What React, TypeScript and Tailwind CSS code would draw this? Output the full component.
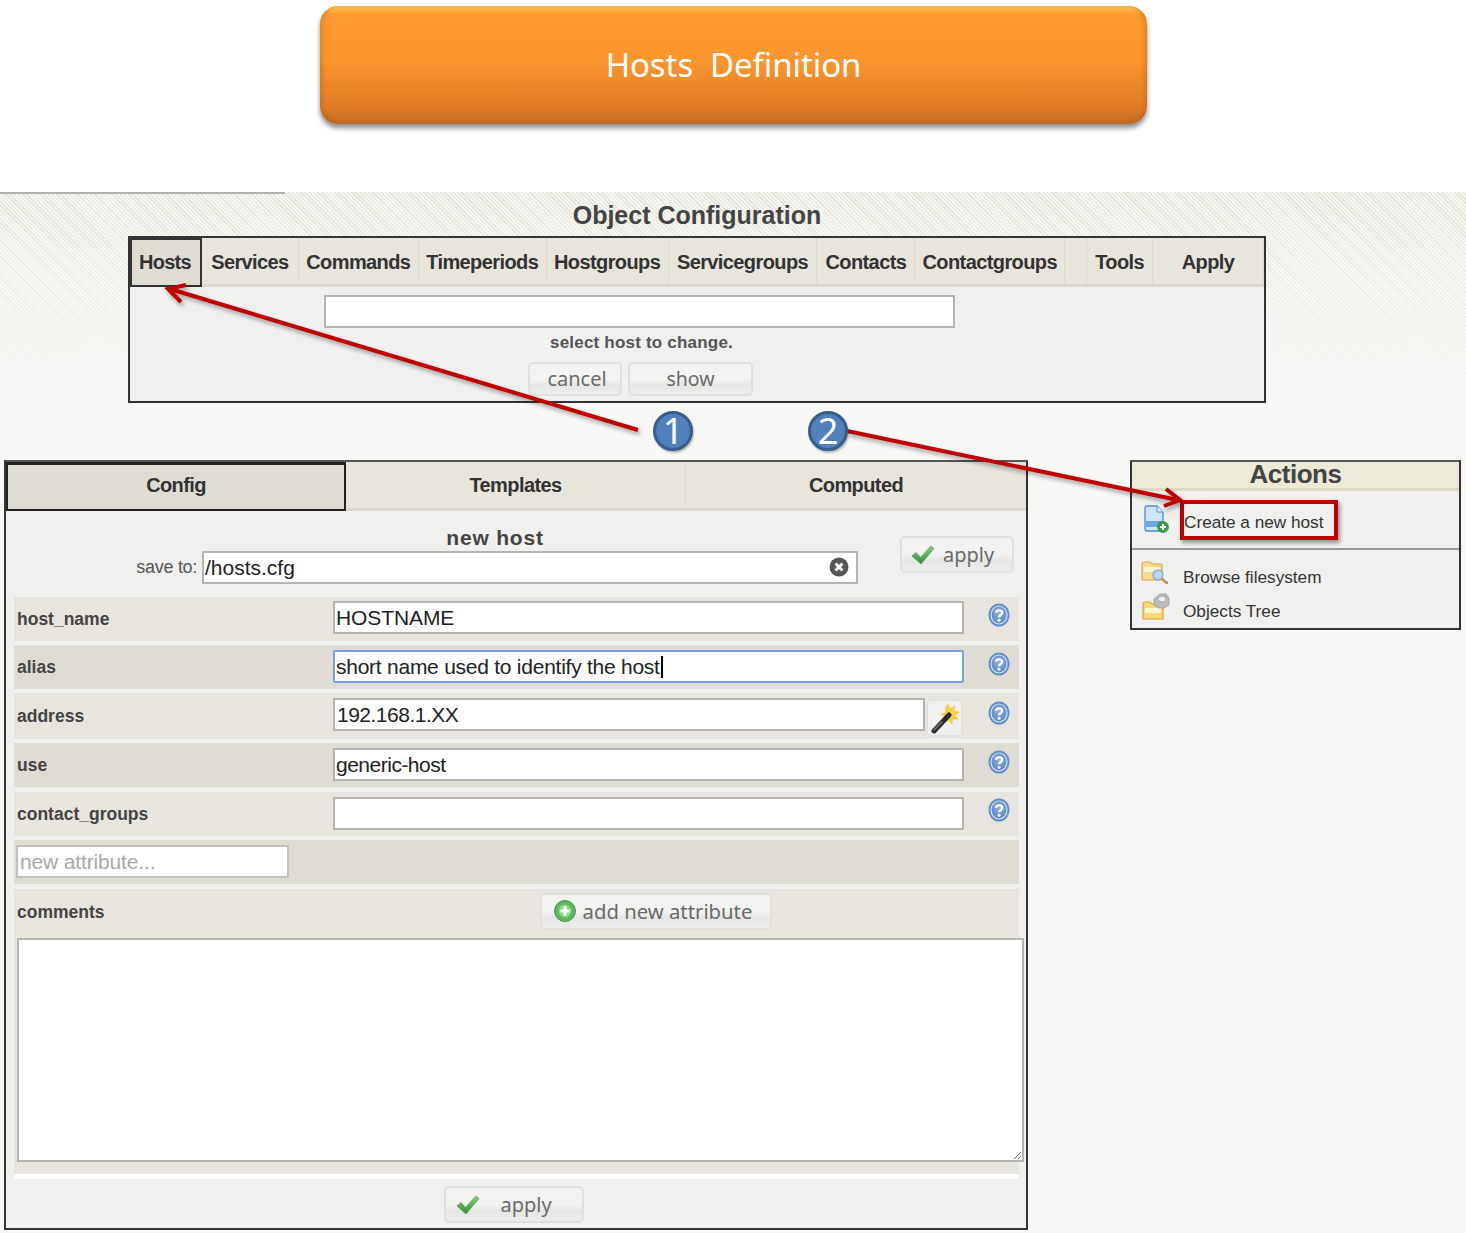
import React from "react";

const sans = "font-['Liberation_Sans',Arial,sans-serif]";
const soft = "font-['Noto_Sans',sans-serif]";

function Check({ size = 24 }: { size?: number }) {
  return (
    <svg width={size} height={size} viewBox="0 0 24 24" className="shrink-0">
      <defs>
        <linearGradient id="chk" x1="0" y1="0" x2="0" y2="1">
          <stop offset="0" stopColor="#8fcf7c" />
          <stop offset="1" stopColor="#2f8f3c" />
        </linearGradient>
      </defs>
      <path d="M1 13 L5 9.5 L9.5 14.5 L20 3 L23 5.5 L10 21 Z" fill="url(#chk)" stroke="#3c8f44" strokeWidth="0.6" />
    </svg>
  );
}

function Help() {
  return (
    <svg width="22" height="24" viewBox="0 0 22 24" className="shrink-0">
      <defs>
        <radialGradient id="hlp" cx="0.5" cy="0.4" r="0.7">
          <stop offset="0" stopColor="#8fb2e2" />
          <stop offset="1" stopColor="#4a7ec4" />
        </radialGradient>
      </defs>
      <ellipse cx="11" cy="12" rx="10.5" ry="11.5" fill="#5f8fcc" />
      <ellipse cx="11" cy="12" rx="8" ry="9" fill="url(#hlp)" stroke="#d4e2f4" strokeWidth="1.2" />
      <path d="M8 9.8 C8 6.6 14.2 6.6 14.2 9.8 C14.2 12 11 11.8 11 14.2" fill="none" stroke="#fff" strokeWidth="2.4" />
      <circle cx="11" cy="17.2" r="1.5" fill="#fff" />
    </svg>
  );
}

function Wand() {
  return (
    <svg width="30" height="32" viewBox="0 0 30 32">
      <path d="M18 2 L20 7 L25 4 L23.5 9 L29 10 L24.5 13 L28 17 L22.5 16.5 L22 22 L18.5 18 L15 20 L15.5 15 L11 12 L16 11 L15.5 6 Z" fill="#f6d33c" stroke="#e8b020" strokeWidth="0.5" />
      <path d="M4 29 L19 13" stroke="#2a2a2a" strokeWidth="5" strokeLinecap="round" />
      <path d="M4 28 L12 20" stroke="#777" strokeWidth="1.4" strokeLinecap="round" />
    </svg>
  );
}

function DocPlus() {
  return (
    <svg width="26" height="28" viewBox="0 0 26 28" className="shrink-0">
      <path d="M2 3 Q2 1 4 1 H14 L20 7 V24 Q20 26 18 26 H4 Q2 26 2 24 Z" fill="#cfe4fa" stroke="#4f8ad0" strokeWidth="1.3" />
      <rect x="3" y="16" width="16" height="6" fill="#6aa6e6" />
      <path d="M14 1 V7 H20" fill="#eaf3fd" stroke="#4f8ad0" strokeWidth="1" />
      <circle cx="20" cy="22" r="5.5" fill="#3f9a4a" stroke="#2a7a36" strokeWidth="0.6" />
      <path d="M20 19 V25 M17 22 H23" stroke="#fff" strokeWidth="1.8" />
    </svg>
  );
}

function FolderSearch() {
  return (
    <svg width="28" height="26" viewBox="0 0 28 26" className="shrink-0">
      <path d="M1 4 Q1 2 3 2 H9 L11 4 H20 Q21 4 21 5 V20 H2 Q1 20 1 19 Z" fill="#f8dc8e" stroke="#e0a458" strokeWidth="1.2" />
      <rect x="3" y="7" width="16" height="5" fill="#fff6d6" />
      <circle cx="17" cy="15" r="5" fill="#bcd7f2" stroke="#7fa4cc" strokeWidth="1.2" />
      <path d="M21 19 L26 23" stroke="#c98a50" strokeWidth="2.4" strokeLinecap="round" />
    </svg>
  );
}

function FolderGear() {
  return (
    <svg width="28" height="28" viewBox="0 0 28 28" className="shrink-0">
      <path d="M1 11 Q1 9 3 9 H8 L10 11 H20 Q21 11 21 12 V26 H2 Q1 26 1 25 Z" fill="#f8d878" stroke="#e0a040" strokeWidth="1.2" />
      <rect x="3" y="15" width="16" height="5" fill="#fff6d6" />
      <path d="M12 6 L18 1 H24 L27 5 V12 L22 15 H17 L12 12 Z" fill="#bdbdbd" stroke="#9a9a9a" strokeWidth="0.8" />
      <ellipse cx="20" cy="6" rx="4" ry="3" fill="#eee" stroke="#999" strokeWidth="0.8" />
    </svg>
  );
}

function Btn({ className, children }: { className: string; children: React.ReactNode }) {
  return (
    <div
      className={`flex items-center justify-center rounded-[5px] border-2 border-[#dfdfdc] bg-[linear-gradient(to_bottom,#f3f3f1_0%,#f3f3f1_50%,#e6e6e4_70%,#ececea_100%)] text-[#6a6a6a] ${soft} ${className}`}
    >
      {children}
    </div>
  );
}

function Box({ className, children }: { className: string; children?: React.ReactNode }) {
  return (
    <div
      className={`flex items-center overflow-hidden whitespace-nowrap border-2 border-[#b4b4b0] bg-white pl-[1px] text-[21px] leading-none text-[#222] ${sans} ${className}`}
    >
      {children}
    </div>
  );
}

const tabs: [string, string][] = [
  ["Services", "w-[97px]"],
  ["Commands", "w-[120px]"],
  ["Timeperiods", "w-[128px]"],
  ["Hostgroups", "w-[122px]"],
  ["Servicegroups", "w-[149px]"],
  ["Contacts", "w-[98px]"],
  ["Contactgroups", "w-[150px]"],
  ["", "w-[22px]"],
  ["Tools", "w-[66px]"],
  ["Apply", "w-[111px]"],
];

function Row({
  label,
  bg,
  className,
  children,
}: {
  label: string;
  bg: string;
  className: string;
  children: React.ReactNode;
}) {
  return (
    <div className={`flex items-center pl-[3px] ${bg} ${className}`}>
      <div className={`w-[316px] pt-[1px] text-[17.5px] font-bold text-[#444] ${sans}`}>{label}</div>
      {children}
    </div>
  );
}

export default function App() {
  return (
    <div className={`relative h-[1233px] w-[1466px] overflow-hidden bg-white ${sans}`}>
      {/* Title banner */}
      <div className="h-[192px] pl-[320px] pt-[6px]">
        <div className="relative flex h-[118px] w-[827px] items-center justify-center rounded-[18px] bg-[linear-gradient(to_bottom,#ffd060_0px,#fd9a30_8px,#fb962e_45%,#e07c26_85%,#c46c22_100%)] shadow-[0_4px_5px_rgba(0,0,0,0.45),inset_3px_0_4px_rgba(150,80,0,0.25),inset_-3px_0_4px_rgba(150,80,0,0.25)]">
          <span className={`text-[33px] tracking-[-0.1px] text-white whitespace-pre ${soft}`}>Hosts  Definition</span>
        </div>
      </div>

      {/* Application area */}
      <div className="h-[1041px] bg-[linear-gradient(to_bottom,rgba(248,248,246,0)_0px,#f8f8f6_205px),repeating-linear-gradient(45deg,#e2e2da_0px,#e2e2da_1px,#f6f6f0_1px,#f6f6f0_3px)]">
        <div className="h-[2px] w-[285px] bg-[#b0b0ac]" />
        <div className="flex h-[42px] items-center justify-center">
          <h1 className="ml-[-72px] text-[25px] font-bold leading-none text-[#444]">Object Configuration</h1>
        </div>

        {/* Host selector */}
        <div className="ml-[128px] h-[167px] w-[1138px] border-2 border-[#333] bg-[#f0f0ee]">
          <div className="flex h-[49px] border-b-[3px] border-[#dcd9cc] bg-[#e8e5dd]">
            <div className="flex h-[49px] w-[72px] items-center justify-center border-2 border-[#333] bg-[#dfdcd3] pb-[2px] pr-[2px] text-[20px] font-bold tracking-[-0.7px] text-[#333]">
              Hosts
            </div>
            {tabs.map(([t, w], i) => (
              <div
                key={i}
                className={`flex items-center justify-center border-r border-[#dcdac8] pt-[1px] text-[20px] font-bold tracking-[-0.6px] text-[#333] ${w}`}
              >
                {t}
              </div>
            ))}
          </div>
          <div className="flex flex-col items-center pr-[115px] pt-[8px]">
            <Box className="h-[33px] w-[631px]" />
            <div className="ml-[4px] mt-[5px] h-[20px] text-[17px] font-bold leading-[20px] tracking-[0.2px] text-[#555]">select host to change.</div>
            <div className="ml-[2px] mt-[9px] flex gap-[6px]">
              <Btn className="h-[34px] w-[94px] pl-[4px] text-[20px]">cancel</Btn>
              <Btn className="h-[34px] w-[125px] text-[19.5px]">show</Btn>
            </div>
          </div>
        </div>

        <div className="mt-[57px] flex items-start">
          {/* Config form */}
          <div className="ml-[4px] h-[770px] w-[1024px] border-2 border-[#333] border-t-[#555] bg-[#f0f0ee]">
            <div className="flex h-[49px] border-b-[3px] border-[#dcd9cc] bg-[#e8e5dd]">
              <div className="flex h-[49px] w-[340px] items-center justify-center border-2 border-t-[3px] border-[#222] bg-[#dfdcd3] pb-[5px] text-[20px] font-bold tracking-[-0.6px] text-[#333]">
                Config
              </div>
              <div className="flex w-[340px] items-center justify-center border-r border-[#dcdac8] pb-[1px] text-[20px] font-bold tracking-[-0.6px] text-[#333]">
                Templates
              </div>
              <div className="flex flex-1 items-center justify-center pb-[1px] text-[20px] font-bold tracking-[-0.6px] text-[#333]">Computed</div>
            </div>

            <div className="flex h-[86px]">
              <div className="w-[852px]">
                <div className="h-[40px] pl-[126px] pt-[15px] text-center text-[21px] font-bold leading-[24px] tracking-[0.8px] text-[#444]">new host</div>
                <div className="flex items-center">
                  <span className="w-[196px] pr-[5px] text-right text-[18px] tracking-[-0.3px] text-[#555]">save to:</span>
                  <Box className="relative h-[33px] w-[656px] pl-[1px]">
                    /hosts.cfg
                    <svg width="20" height="20" viewBox="0 0 20 20" className="absolute right-[7px] top-[4px]">
                      <circle cx="10" cy="10" r="9.5" fill="#555" />
                      <path d="M6.5 6.5 L13.5 13.5 M13.5 6.5 L6.5 13.5" stroke="#fff" strokeWidth="3" />
                    </svg>
                  </Box>
                </div>
              </div>
              <div className="ml-[42px] pt-[25px]">
                <Btn className="h-[37px] w-[114px] !justify-start gap-[8px] pl-[9px] text-[20px]">
                  <Check />
                  apply
                </Btn>
              </div>
            </div>

            <div className="ml-[8px] w-[1005px]">
              <Row label="host_name" bg="bg-[#e8e5de]" className="h-[44px]">
                <Box className="mb-[3px] h-[33px] w-[631px] pl-[1px] tracking-[-0.1px]">HOSTNAME</Box>
                <div className="ml-[24px] mb-[9px]"><Help /></div>
              </Row>
              <Row label="alias" bg="bg-[#dfdcd4]" className="mt-[4px] h-[44px]">
                <Box className="mb-[1px] h-[33px] w-[631px] rounded-[2px] !border-[#7a9fde] pl-[1px] tracking-[-0.25px]">
                  short name used to identify the host
                  <span className="ml-[1px] inline-block h-[22px] w-[2px] bg-black" />
                </Box>
                <div className="ml-[24px] mb-[7px]"><Help /></div>
              </Row>
              <Row label="address" bg="bg-[#e8e5de]" className="mt-[4px] h-[46px]">
                <Box className="mb-[3px] h-[33px] w-[592px] pl-[2px] tracking-[-0.5px]">192.168.1.XX</Box>
                <div className="mb-[-3px] ml-[1px] flex h-[38px] w-[37px] items-center justify-center rounded-[6px] border-2 border-[#e2e2e0] bg-[#f0f0ee]">
                  <Wand />
                </div>
                <div className="ml-[25px] mb-[7px]"><Help /></div>
              </Row>
              <Row label="use" bg="bg-[#dfdcd4]" className="mt-[4px] h-[44px]">
                <Box className="mb-[1px] h-[33px] w-[631px] pl-[1px] tracking-[-0.5px]">generic-host</Box>
                <div className="ml-[24px] mb-[7px]"><Help /></div>
              </Row>
              <Row label="contact_groups" bg="bg-[#e8e5de]" className="mt-[5px] h-[44px]">
                <Box className="mb-[1px] h-[33px] w-[631px]" />
                <div className="ml-[24px] mb-[9px]"><Help /></div>
              </Row>
              <div className="mt-[4px] flex h-[44px] items-center bg-[#dfdcd4] pl-[2px]">
                <Box className="mb-[1px] h-[33px] w-[273px] !border-[#c0c0bc] pl-[2px] tracking-[-0.15px] !text-[#a8a8a8]">new attribute...</Box>
              </div>
              <div className="mt-[5px] h-[285px] border-b-[12px] border-[#e8e5de] bg-[#e8e5de]">
                <div className="flex h-[49px] items-center pl-[3px]">
                  <div className="w-[523px] pb-[3px] text-[17.5px] font-bold text-[#444]">comments</div>
                  <Btn className="mb-[5px] h-[37px] w-[232px] gap-[7px] pr-[6px] text-[20.3px]">
                    <svg width="22" height="22" viewBox="0 0 22 22" className="shrink-0">
                      <circle cx="11" cy="11" r="10.5" fill="#5cb85c" stroke="#3f9a46" />
                      <circle cx="11" cy="11" r="6.5" fill="#8fd688" />
                      <path d="M11 6.5 V15.5 M6.5 11 H15.5" stroke="#fff" strokeWidth="3" />
                    </svg>
                    add new attribute
                  </Btn>
                </div>
                <textarea
                  readOnly
                  aria-label="comments"
                  className="ml-[3px] block h-[224px] w-[1007px] border-2 border-[#b4b4b0] bg-white"
                />
              </div>
              <div className="h-[5px] bg-white" />
              <div className="flex justify-center pt-[7px]">
                <Btn className="ml-[-6px] h-[37px] w-[140px] !justify-start gap-[21px] pl-[10px] text-[20px]">
                  <Check />
                  apply
                </Btn>
              </div>
            </div>
          </div>

          {/* Actions panel */}
          <div className="ml-[102px] h-[170px] w-[331px] border-2 border-[#333] border-t-[#555] bg-[#f0f0ee]">
            <div className="flex h-[29px] items-center justify-center border-b-[3px] border-[#dcdac4] bg-[#ecead8] pb-[2px] text-[26px] font-bold leading-none tracking-[-0.5px] text-[#444]">
              Actions
            </div>
            <div className="flex h-[59px] items-start border-b-2 border-[#999] pl-[11px] pt-[14px] text-[17.2px] leading-[20px] text-[#333]">
              <DocPlus />
              <span className="ml-[15px] mt-[7px]">Create a new host</span>
            </div>
            <div className="flex h-[41px] items-start pl-[9px] pt-[10px] text-[17.2px] leading-[20px] text-[#333]">
              <FolderSearch />
              <span className="ml-[14px] mt-[7px]">Browse filesystem</span>
            </div>
            <div className="flex h-[35px] items-start pl-[10px] pt-[2px] text-[17.2px] leading-[20px] text-[#333]">
              <FolderGear />
              <span className="ml-[13px] mt-[8px]">Objects Tree</span>
            </div>
          </div>
        </div>
      </div>

      {/* Callout annotations */}
      <div className="absolute left-[1180px] top-[500px] h-[40px] w-[158px] border-[4px] border-[#c00000] shadow-[2px_3px_4px_rgba(0,0,0,0.4)]" />
      <svg
        className="absolute left-0 top-0 h-[1233px] w-[1466px] drop-shadow-[2px_3px_2px_rgba(0,0,0,0.35)]"
        viewBox="0 0 1466 1233"
        fill="none"
      >
        <path d="M638 430 L170 289" stroke="#c00000" strokeWidth="4" />
        <path d="M186 285 L168 289 L181 302" stroke="#c00000" strokeWidth="4" />
        <path d="M847 431 L1178 500" stroke="#c00000" strokeWidth="4" />
        <path d="M1166 489 L1180 500 L1164 506" stroke="#c00000" strokeWidth="4" />
      </svg>
      <div className={`absolute left-[653px] top-[411px] flex h-[40px] w-[40px] items-center justify-center rounded-full border-[3px] border-[#385d8a] bg-[#4f81bd] text-[36px] leading-none text-white shadow-[1px_2px_2px_rgba(0,0,0,0.25)] ${soft}`}>1</div>
      <div className={`absolute left-[808px] top-[411px] flex h-[40px] w-[40px] items-center justify-center rounded-full border-[3px] border-[#385d8a] bg-[#4f81bd] text-[36px] leading-none text-white shadow-[1px_2px_2px_rgba(0,0,0,0.25)] ${soft}`}>2</div>
    </div>
  );
}
